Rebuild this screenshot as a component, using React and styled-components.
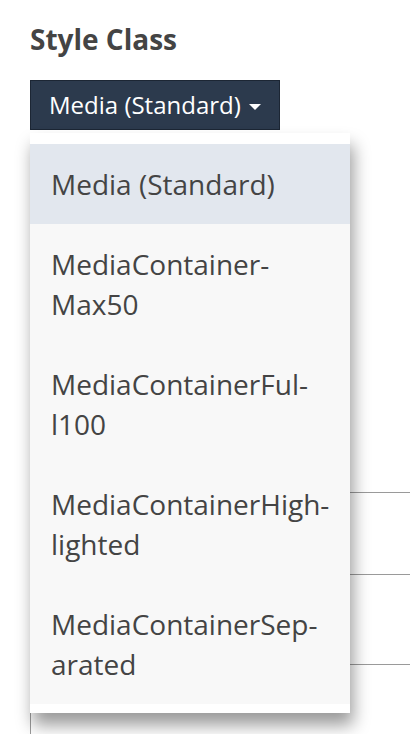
import React from "react";
import styled, { createGlobalStyle } from "styled-components";

const Global = createGlobalStyle`
  html, body { margin: 0; padding: 0; background: #ffffff; }
  body { font-family: "Open Sans", "Noto Sans", sans-serif; overflow: hidden; }
`;

const Page = styled.div`
  width: 410px;
  height: 734px;
  padding: 0 0 0 30px;
  box-sizing: border-box;
  overflow: hidden;
`;

const Heading = styled.h2`
  margin: 0;
  padding-top: 20px;
  font-size: 28px;
  line-height: 38px;
  font-weight: 700;
  color: #444444;
`;

const Field = styled.div`
  position: relative;
  margin-top: 22px;
`;

const Toggle = styled.button`
  display: inline-flex;
  align-items: center;
  gap: 8px;
  height: 50px;
  box-sizing: border-box;
  padding: 0 18px 0 18px;
  background: #2c3a4d;
  border: 1px solid #1c2634;
  border-radius: 0;
  color: #ffffff;
  font-family: "Open Sans", "Noto Sans", sans-serif;
  font-size: 24px;
  line-height: 1;
`;

const Caret = styled.span`
  display: inline-block;
  width: 0;
  height: 0;
  margin-top: 3px;
  border-left: 6.5px solid transparent;
  border-right: 6.5px solid transparent;
  border-top: 6.5px solid #ffffff;
`;

const Table = styled.div`
  margin-top: 10px;
  border-left: 1px solid #9a9a9a;
  display: flex;
  flex-direction: column;
`;

const Row = styled.div`
  height: ${(p) => p.$h}px;
  border-bottom: 1px solid #9a9a9a;
`;

const Menu = styled.ul`
  position: absolute;
  top: 53px;
  left: 0;
  width: 320px;
  margin: 0;
  padding: 11px 0 9px;
  list-style: none;
  background: #ffffff;
  box-shadow: 3px 12px 16px rgba(0, 0, 0, 0.4);
`;

const Item = styled.li`
  padding: 20px 21px;
  font-size: 28px;
  line-height: 40px;
  color: #444444;
  background: ${(p) => (p.$active ? "#e2e7ee" : "#f8f8f8")};
`;

const items = [
  ["Media (Standard)"],
  ["MediaContainer-", "Max50"],
  ["MediaContainerFul-", "l100"],
  ["MediaContainerHigh-", "lighted"],
  ["MediaContainerSep-", "arated"],
];

export default function App() {
  return (
    <Page>
      <Global />
      <Heading>Style Class</Heading>
      <Field>
        <Toggle>
          Media (Standard)
          <Caret />
        </Toggle>
        <Table>
          <Row $h={352} />
          <Row $h={81} />
          <Row $h={89} />
          <Row $h={200} />
        </Table>
        <Menu>
          {items.map((lines, i) => (
            <Item key={i} $active={i === 0}>
              {lines.map((l, j) => (
                <React.Fragment key={j}>
                  {j > 0 && <br />}
                  {l}
                </React.Fragment>
              ))}
            </Item>
          ))}
        </Menu>
      </Field>
    </Page>
  );
}
